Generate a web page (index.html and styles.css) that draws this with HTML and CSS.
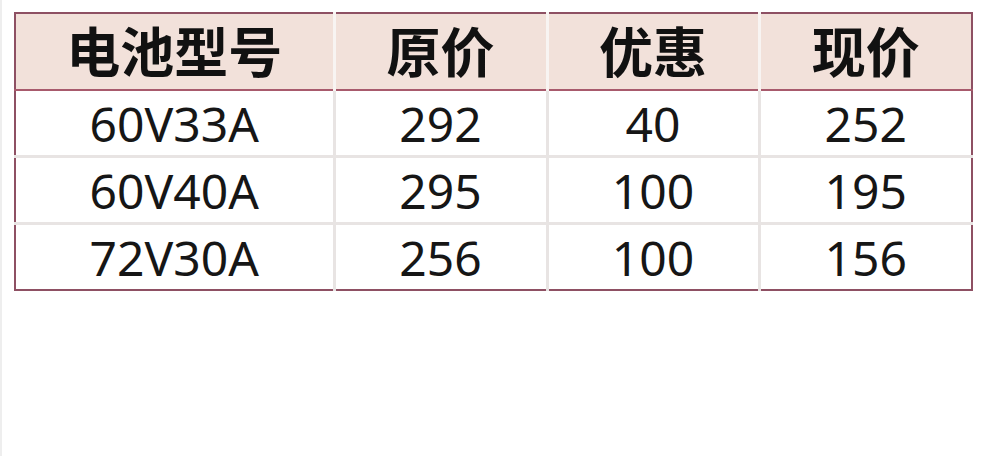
FILE: index.html
```html
<!DOCTYPE html>
<html lang="zh">
<head>
<meta charset="utf-8">
<link rel="stylesheet" href="styles.css">
</head>
<body>
<div class="page">
  <table class="price">
    <colgroup>
      <col class="c1"><col class="c2"><col class="c3"><col class="c4">
    </colgroup>
    <thead>
      <tr><th>电池型号</th><th>原价</th><th>优惠</th><th>现价</th></tr>
    </thead>
    <tbody>
      <tr><td>60V33A</td><td>292</td><td>40</td><td>252</td></tr>
      <tr><td>60V40A</td><td>295</td><td>100</td><td>195</td></tr>
      <tr><td>72V30A</td><td>256</td><td>100</td><td>156</td></tr>
    </tbody>
  </table>
</div>
</body>
</html>
```
FILE: styles.css
```css
html, body {
  margin: 0;
  padding: 0;
  background: #ffffff;
}
.page {
  width: 988px;
  height: 456px;
  padding: 12px 0 0 14px;
  box-sizing: border-box;
  border-left: 2px solid #eeeeee;
}
.price {
  border-collapse: collapse;
  width: 957px;
  border: 2px solid #8e5063;
  margin-left: -2px;
  table-layout: fixed;
}
.c1 { width: 319px; }
.c2 { width: 213px; }
.c3 { width: 212px; }
.c4 { width: 213px; }
.price th {
  background: #f2e1da;
  height: 71px;
  padding: 0 0 4px 0;
  font-family: "Noto Sans CJK SC", sans-serif;
  font-weight: 700;
  font-size: 54px;
  color: #111111;
  text-align: center;
  border-bottom: 2px solid #a85a6c;
  border-left: 3px solid #f8f4f2;
  line-height: 1;
}
.price td {
  height: 62px;
  padding: 2px 0 0 0;
  font-family: "Noto Sans", sans-serif;
  font-weight: 400;
  font-size: 48px;
  color: #161616;
  text-align: center;
  border-top: 3px solid #e8e4e3;
  border-left: 3px solid #e8e4e3;
  line-height: 1;
}
.price thead tr th:first-child,
.price tbody tr td:first-child {
  border-left: none;
}
.price tbody tr:first-child td {
  border-top: none;
}
```
